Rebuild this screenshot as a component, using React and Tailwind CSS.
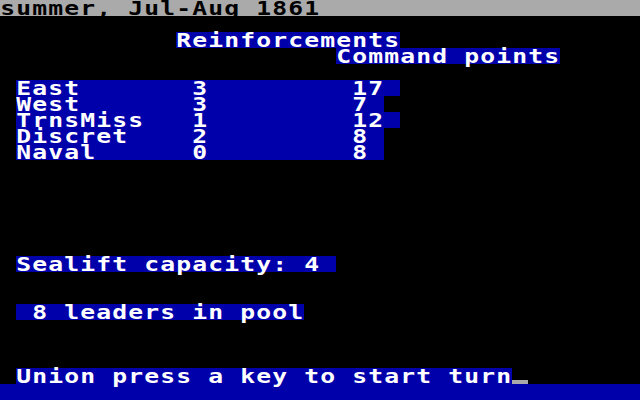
import React from 'react';

// 40x25 text screen, every character cell is 16x16
const Cells = ({ text, className = '' }) => (
  <span className={`flex ${className}`}>
    {text.split('').map((ch, i) => (
      <span key={i} className="inline-block w-4 h-4 text-center">
        <span className="inline-block scale-x-[1.3]">{ch === ' ' ? '\u00a0' : ch}</span>
      </span>
    ))}
  </span>
);

const Blank = () => <div className="h-4" />;

const forces = [
  'East       3         17 ',
  'West       3         7 ',
  'TrnsMiss   1         12 ',
  'Discret    2         8 ',
  'Naval      0         8 ',
];

export default function App() {
  return (
    <div className="w-[640px] h-[400px] bg-black text-white font-['DejaVu_Sans_Mono',monospace] font-bold text-[19px] leading-4 overflow-hidden flex flex-col">
      {/* status line */}
      <div className="h-4 flex bg-[#aaaaaa] text-black">
        <Cells text="summer, Jul-Aug 1861" />
      </div>
      <Blank />
      <div className="h-4 flex pl-[176px]">
        <Cells text="Reinforcements" className="bg-[#0000aa]" />
      </div>
      <div className="h-4 flex pl-[336px]">
        <Cells text="Command points" className="bg-[#0000aa]" />
      </div>
      <Blank />
      {forces.map((line) => (
        <div key={line} className="h-4 flex pl-4">
          <Cells text={line} className="bg-[#0000aa]" />
        </div>
      ))}
      <Blank />
      <Blank />
      <Blank />
      <Blank />
      <Blank />
      <Blank />
      <div className="h-4 flex pl-4">
        <Cells text="Sealift capacity: 4 " className="bg-[#0000aa]" />
      </div>
      <Blank />
      <Blank />
      <div className="h-4 flex pl-4">
        <Cells text=" 8 leaders in pool" className="bg-[#0000aa]" />
      </div>
      <Blank />
      <Blank />
      <Blank />
      <div className="h-4 flex pl-4">
        <Cells text="Union press a key to start turn" className="bg-[#0000aa]" />
        {/* cursor */}
        <span className="w-4 h-4 flex items-end">
          <span className="w-4 h-1 bg-[#aaaaaa]" />
        </span>
      </div>
      <div className="h-4 bg-[#0000aa]" />
    </div>
  );
}
